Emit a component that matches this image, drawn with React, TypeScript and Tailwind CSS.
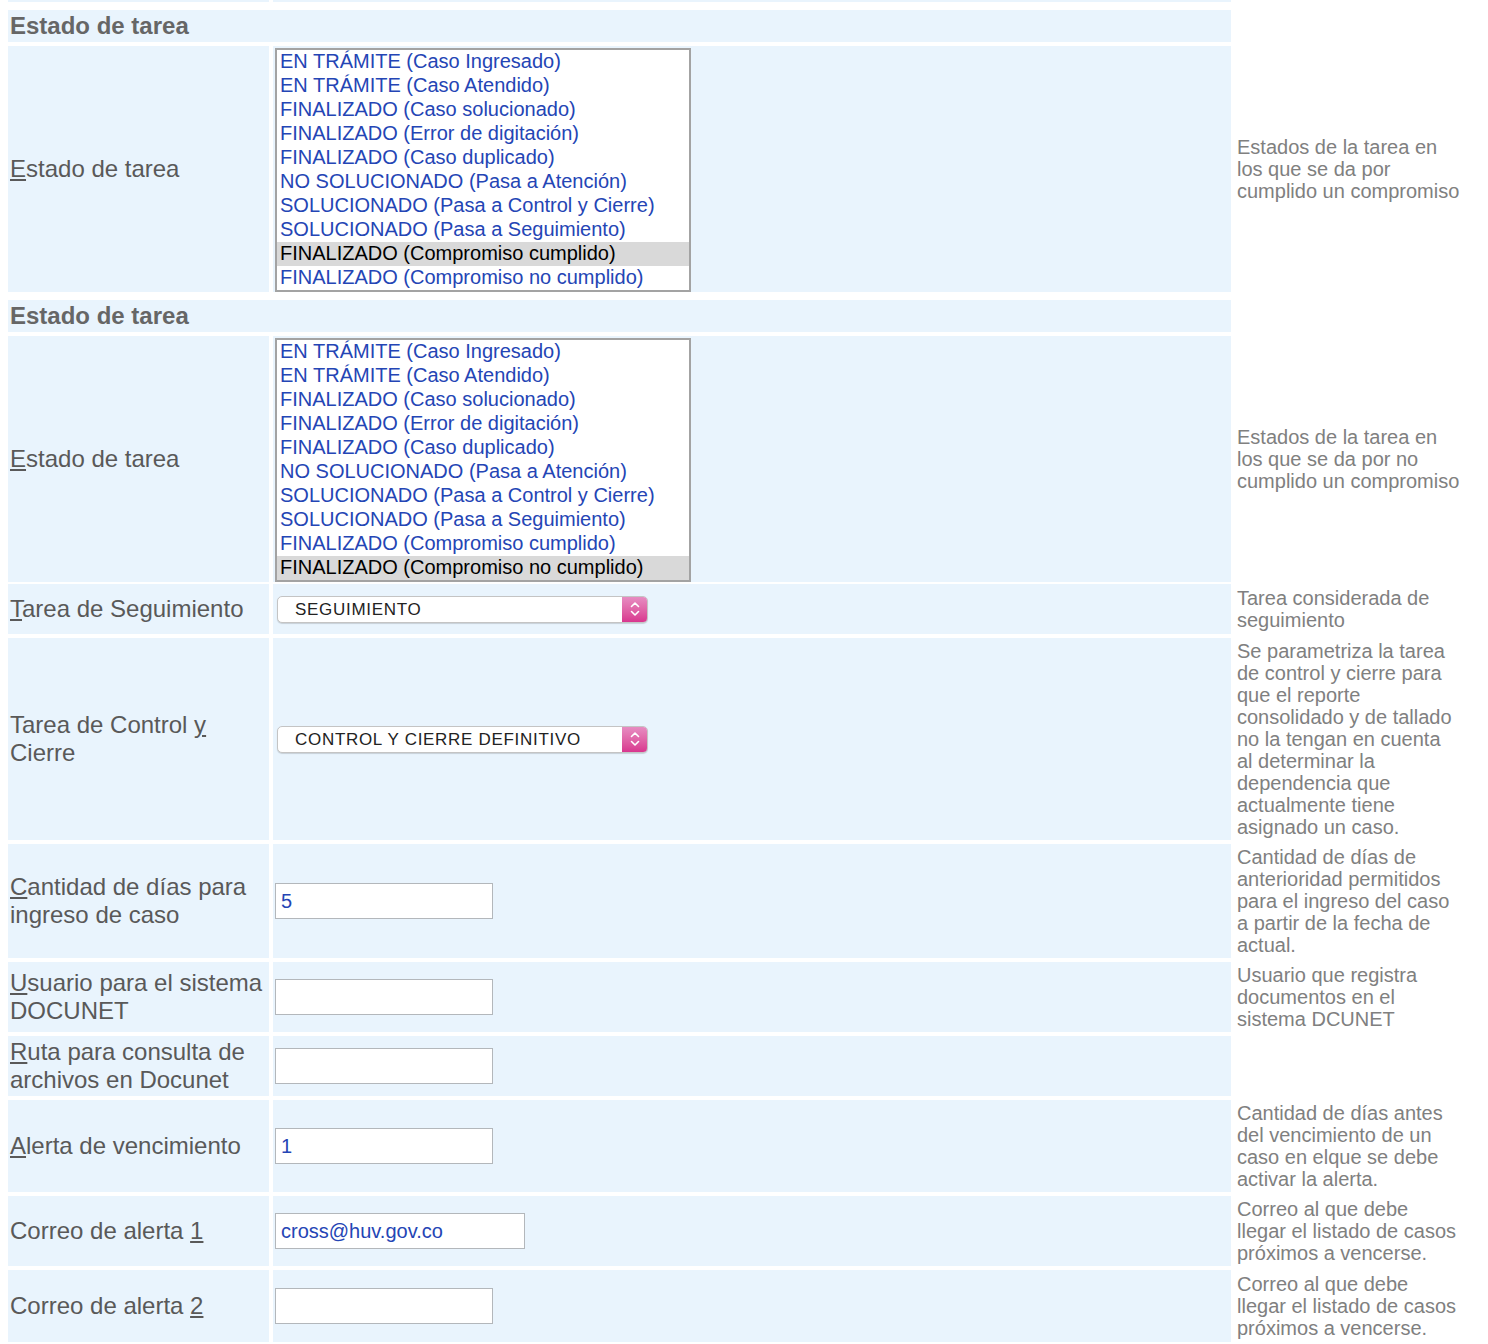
import type { ReactNode } from 'react';

const estados = [
  'EN TRÁMITE (Caso Ingresado)',
  'EN TRÁMITE (Caso Atendido)',
  'FINALIZADO (Caso solucionado)',
  'FINALIZADO (Error de digitación)',
  'FINALIZADO (Caso duplicado)',
  'NO SOLUCIONADO (Pasa a Atención)',
  'SOLUCIONADO (Pasa a Control y Cierre)',
  'SOLUCIONADO (Pasa a Seguimiento)',
  'FINALIZADO (Compromiso cumplido)',
  'FINALIZADO (Compromiso no cumplido)',
];

function ListBox({ selected }: { selected: number }) {
  return (
    <div className="w-[416px] border-2 border-[#a3a3a3] bg-white">
      {estados.map((e, i) => (
        <div
          key={e}
          className={
            i === selected
              ? 'h-6 pl-[3px] text-[20px] leading-[23px] text-black bg-[#d9d9d9]'
              : 'h-6 pl-[3px] text-[20px] leading-[23px] text-[#2445b5]'
          }
        >
          {e}
        </div>
      ))}
    </div>
  );
}

function Select({ value }: { value: string }) {
  return (
    <div className="ml-[2px] flex h-[27px] w-[371px] items-stretch rounded-[5px] border border-[#c4c4c4] bg-white shadow-[0_1px_1px_rgba(0,0,0,0.15)] overflow-hidden">
      <div className="flex flex-1 items-center pl-[17px] pt-[2px] text-[17px] tracking-[0.7px] text-[#222]">{value}</div>
      <div className="flex w-[25px] items-center justify-center bg-gradient-to-b from-[#e68cc2] to-[#d8358f]">
        <svg width="12" height="18" viewBox="0 0 12 18" fill="none" stroke="white" strokeWidth="1.6" strokeLinecap="round" strokeLinejoin="round">
          <path d="M2.5 6.5 L6 3 L9.5 6.5" />
          <path d="M2.5 11.5 L6 15 L9.5 11.5" />
        </svg>
      </div>
    </div>
  );
}

function Input({ value, wide }: { value?: string; wide?: boolean }) {
  return (
    <div
      className={
        (wide ? 'w-[250px]' : 'w-[218px]') +
        ' flex h-9 items-center border border-[#b3b7bb] bg-white pl-[5px] text-[20px] text-[#2445b5]'
      }
    >
      {value}
    </div>
  );
}

function Row({
  h,
  label,
  desc,
  top,
  children,
}: {
  h: string;
  label: ReactNode;
  desc?: ReactNode;
  top?: boolean;
  children?: ReactNode;
}) {
  return (
    <div className={'grid grid-cols-[261px_958px_1fr] gap-x-1 ' + h}>
      <div className="flex items-center bg-[#e9f4fd] px-[2px] text-[24px] leading-[28px] text-[#595959]">
        <div>{label}</div>
      </div>
      <div className={'flex bg-[#e9f4fd] px-[2px] ' + (top ? 'items-start pt-[2px]' : 'items-center')}>
        {children}
      </div>
      <div className="flex items-center px-[2px]">
        <div className="w-[223px] text-[20px] leading-[22px] text-[#808080]">{desc}</div>
      </div>
    </div>
  );
}

function Header({ title }: { title: string }) {
  return (
    <div className="mt-1 grid h-8 grid-cols-[1223px_1fr]">
      <div className="flex items-center bg-[#e9f4fd] px-[2px] pb-[1px] text-[24px] leading-[28px] font-bold text-[#666]">
        {title}
      </div>
      <div />
    </div>
  );
}

export default function App() {
  return (
    <div className="min-h-screen bg-white pl-2 font-['Liberation_Sans',Arial,sans-serif]">
      <div className="flex flex-col gap-1">
        {/* end of the previous table */}
        <div className="grid grid-cols-[261px_958px_1fr] gap-x-1 h-[2px]">
          <div className="bg-[#e9f4fd]" />
          <div className="bg-[#e9f4fd]" />
          <div />
        </div>

        <Header title="Estado de tarea" />
        <Row
          h="h-[246px]"
          top
          label={<><u>E</u>stado de tarea</>}
          desc="Estados de la tarea en los que se da por cumplido un compromiso"
        >
          <ListBox selected={8} />
        </Row>

        <Header title="Estado de tarea" />
        <Row
          h="h-[244px]"
          top
          label={<><u>E</u>stado de tarea</>}
          desc="Estados de la tarea en los que se da por no cumplido un compromiso"
        >
          <ListBox selected={9} />
        </Row>

        <Row
          h="h-[50px]"
          label={<><u>T</u>area de Seguimiento</>}
          desc="Tarea considerada de seguimiento"
        >
          <Select value="SEGUIMIENTO" />
        </Row>

        <Row
          h="h-[202px]"
          label={<>Tarea de Control <u>y</u> Cierre</>}
          desc="Se parametriza la tarea de control y cierre para que el reporte consolidado y de tallado no la tengan en cuenta al determinar la dependencia que actualmente tiene asignado un caso."
        >
          <Select value="CONTROL Y CIERRE DEFINITIVO" />
        </Row>

        <Row
          h="h-[114px]"
          label={<><u>C</u>antidad de días para ingreso de caso</>}
          desc="Cantidad de días de anterioridad permitidos para el ingreso del caso a partir de la fecha de actual."
        >
          <Input value="5" />
        </Row>

        <Row
          h="h-[70px]"
          label={<><u>U</u>suario para el sistema DOCUNET</>}
          desc="Usuario que registra documentos en el sistema DCUNET"
        >
          <Input />
        </Row>

        <Row h="h-[60px]" label={<><u>R</u>uta para consulta de archivos en Docunet</>}>
          <Input />
        </Row>

        <Row
          h="h-[92px]"
          label={<><u>A</u>lerta de vencimiento</>}
          desc="Cantidad de días antes del vencimiento de un caso en elque se debe activar la alerta."
        >
          <Input value="1" />
        </Row>

        <Row
          h="h-[70px]"
          label={<>Correo de alerta <u>1</u></>}
          desc="Correo al que debe llegar el listado de casos próximos a vencerse."
        >
          <Input value="cross@huv.gov.co" wide />
        </Row>

        <Row
          h="h-[72px]"
          label={<>Correo de alerta <u>2</u></>}
          desc="Correo al que debe llegar el listado de casos próximos a vencerse."
        >
          <Input />
        </Row>
      </div>
    </div>
  );
}
